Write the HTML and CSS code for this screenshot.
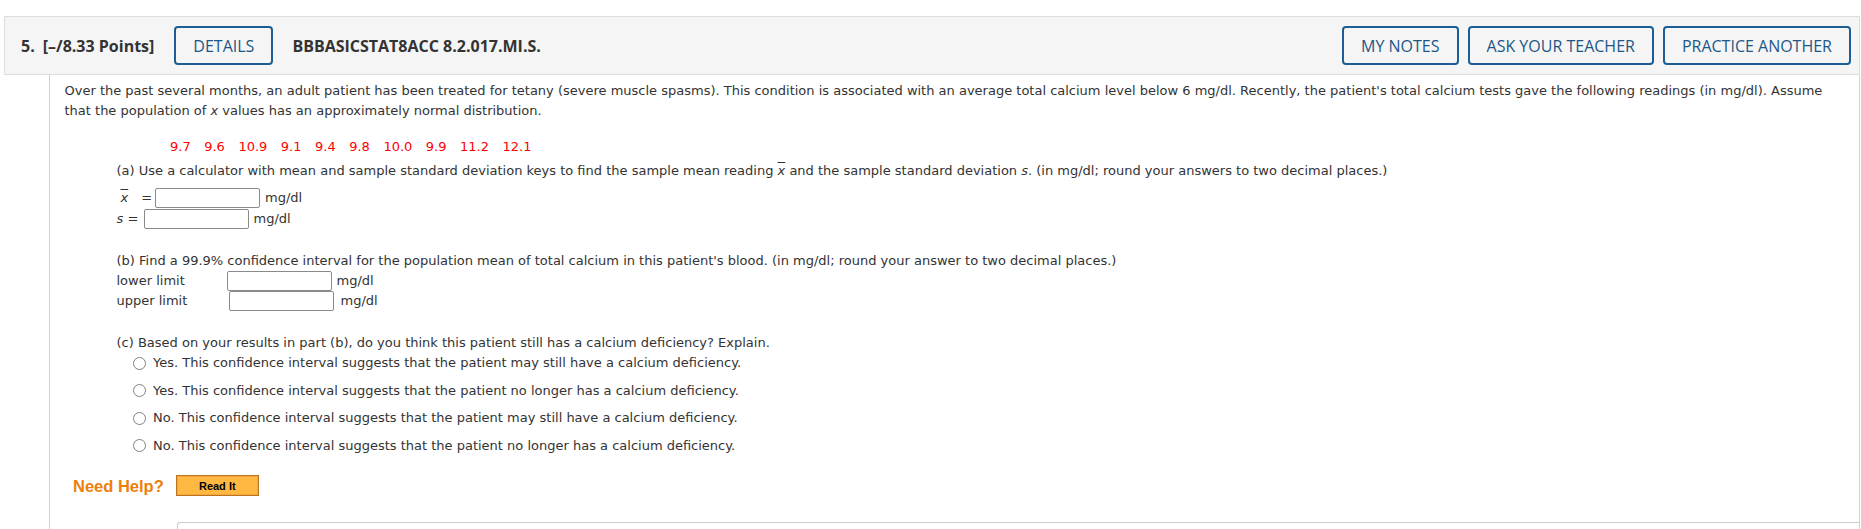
FILE: index.html
```html
<!DOCTYPE html>
<html lang="en">
<head>
<meta charset="utf-8">
<title>Question 5</title>
<link rel="stylesheet" href="styles.css">
</head>
<body>
<div class="question">
  <div class="qhead">
    <span class="qnum">5.</span>
    <span class="qpts">[–/8.33 Points]</span>
    <span class="btn btn-details">DETAILS</span>
    <span class="qcode">BBBASICSTAT8ACC 8.2.017.MI.S.</span>
    <div class="qactions">
      <span class="btn">MY NOTES</span>
      <span class="btn">ASK YOUR TEACHER</span>
      <span class="btn">PRACTICE ANOTHER</span>
    </div>
  </div>
  <div class="qbody">
    <p class="intro">Over the past several months, an adult patient has been treated for tetany (severe muscle spasms). This condition is associated with an average total calcium level below 6 mg/dl. Recently, the patient's total calcium tests gave the following readings (in mg/dl). Assume<br>that the population of <i>x</i> values has an approximately normal distribution.</p>
    <div class="data">
      <span>9.7</span><span>9.6</span><span>10.9</span><span>9.1</span><span>9.4</span><span>9.8</span><span>10.0</span><span>9.9</span><span>11.2</span><span>12.1</span>
    </div>
    <div class="part">
      <div class="row prompt-a">(a) Use a calculator with mean and sample standard deviation keys to find the sample mean reading <span class="xbar">x</span> and the sample standard deviation <i>s</i>. (in mg/dl; round your answers to two decimal places.)</div>
      <div class="ans ans-first"><span class="lbl lbl-x"><span class="xbar xbar-lbl">x</span><span class="eq">=</span></span><span class="box"></span><span class="unit">mg/dl</span></div>
      <div class="ans ans-s"><span class="lbl lbl-s"><i>s</i> =</span><span class="box"></span><span class="unit">mg/dl</span></div>

      <div class="row prompt-b">(b) Find a 99.9% confidence interval for the population mean of total calcium in this patient's blood. (in mg/dl; round your answer to two decimal places.)</div>
      <div class="ans"><span class="lbl lbl-low">lower limit</span><span class="box"></span><span class="unit">mg/dl</span></div>
      <div class="ans"><span class="lbl lbl-up">upper limit</span><span class="box"></span><span class="unit unit-up">mg/dl</span></div>

      <div class="row prompt-c">(c) Based on your results in part (b), do you think this patient still has a calcium deficiency? Explain.</div>
      <div class="opt opt-first"><span class="radio"></span>Yes. This confidence interval suggests that the patient may still have a calcium deficiency.</div>
      <div class="opt"><span class="radio"></span>Yes. This confidence interval suggests that the patient no longer has a calcium deficiency.</div>
      <div class="opt"><span class="radio"></span>No. This confidence interval suggests that the patient may still have a calcium deficiency.</div>
      <div class="opt"><span class="radio"></span>No. This confidence interval suggests that the patient no longer has a calcium deficiency.</div>
    </div>
    <div class="help">
      <span class="help-label">Need Help?</span>
      <span class="readit">Read It</span>
    </div>
    <div class="submit-box"></div>
  </div>
</div>
</body>
</html>
```

FILE: styles.css
```css
html, body {
  margin: 0;
  padding: 0;
  background: #ffffff;
}

body {
  font-family: "DejaVu Sans", Verdana, sans-serif;
  color: #333333;
}

.question {
  margin: 16px 1px 0 4px;
}

.qhead {
  display: flex;
  align-items: center;
  height: 57px;
  background: #f5f5f5;
  border: 1px solid #dddddd;
  padding: 0 8px 0 16px;
  font-family: "Open Sans", "Liberation Sans", sans-serif;
  font-size: 16px;
  color: #333333;
}

.qnum {
  font-weight: 700;
}

.qpts {
  font-weight: 700;
  margin-left: 8px;
}

.btn {
  display: inline-flex;
  align-items: center;
  box-sizing: border-box;
  height: 39px;
  padding: 0 17px;
  border: 2px solid #1b5e95;
  border-radius: 4px;
  color: #1d5788;
  white-space: nowrap;
}

.btn-details {
  margin-left: 20px;
}

.qcode {
  margin-left: 19px;
  font-weight: 700;
}

.qactions {
  margin-left: auto;
  display: flex;
  gap: 9px;
}

.qbody {
  margin-left: 45px;
  border-left: 1px solid #d2d2d2;
  border-right: 1px solid #d2d2d2;
  padding: 6px 0 0 14.5px;
  font-size: 13px;
  line-height: 20px;
}

.intro {
  margin: 0;
  padding-right: 14px;
}

.data {
  margin: 16px 0 0 105.5px;
  display: flex;
  gap: 13.5px;
  color: #ff0000;
}

.part {
  margin-left: 52px;
}

.row {
  height: 20px;
  white-space: nowrap;
}

.prompt-a {
  margin-top: 4px;
}

.prompt-b,
.prompt-c {
  margin-top: 22px;
}

.xbar {
  font-style: italic;
  text-decoration: overline;
}

.ans {
  display: flex;
  align-items: center;
  height: 20px;
}

.ans-first {
  margin-top: 7px;
}

.ans-s {
  margin-top: 1px;
}

.lbl {
  display: inline-block;
  flex: none;
}

.lbl-x {
  width: 38.5px;
}

.xbar-lbl {
  margin-left: 4px;
}

.eq {
  margin-left: 13px;
}

.lbl-s {
  width: 27px;
}

.lbl-low {
  width: 110px;
}

.lbl-up {
  width: 112px;
}

.box {
  display: inline-block;
  box-sizing: border-box;
  width: 105px;
  height: 20px;
  border: 1px solid #8a8a8a;
  border-radius: 2px;
  background: #ffffff;
}

.unit {
  margin-left: 5px;
}

.unit-up {
  margin-left: 7px;
}

.opt {
  display: flex;
  align-items: center;
  height: 20px;
  margin-top: 7.5px;
  white-space: nowrap;
}

.opt-first {
  margin-top: 0;
}

.radio {
  display: inline-block;
  box-sizing: border-box;
  width: 13px;
  height: 13px;
  border: 1px solid #808080;
  border-radius: 50%;
  margin: 0 7px 0 16.5px;
  background: #ffffff;
}

.help {
  display: flex;
  align-items: center;
  margin: 19.5px 0 0 8.5px;
  height: 21px;
}

.help-label {
  font-family: "Liberation Sans", Arial, sans-serif;
  font-weight: 700;
  font-size: 16.5px;
  color: #ec7f0b;
}

.readit {
  display: inline-flex;
  align-items: center;
  justify-content: center;
  box-sizing: border-box;
  width: 83px;
  height: 21px;
  margin-left: 12px;
  border: 1px solid #b8741e;
  box-shadow: inset 0 0 0 1px #f5a73c;
  background: #ffb943;
  font-family: "Liberation Sans", Arial, sans-serif;
  font-weight: 700;
  font-size: 11px;
  color: #000000;
}

.submit-box {
  margin: 26px 0 0 112.5px;
  height: 12px;
  border-top: 1px solid #cccccc;
  border-left: 1px solid #cccccc;
  border-top-left-radius: 3px;
}
```
